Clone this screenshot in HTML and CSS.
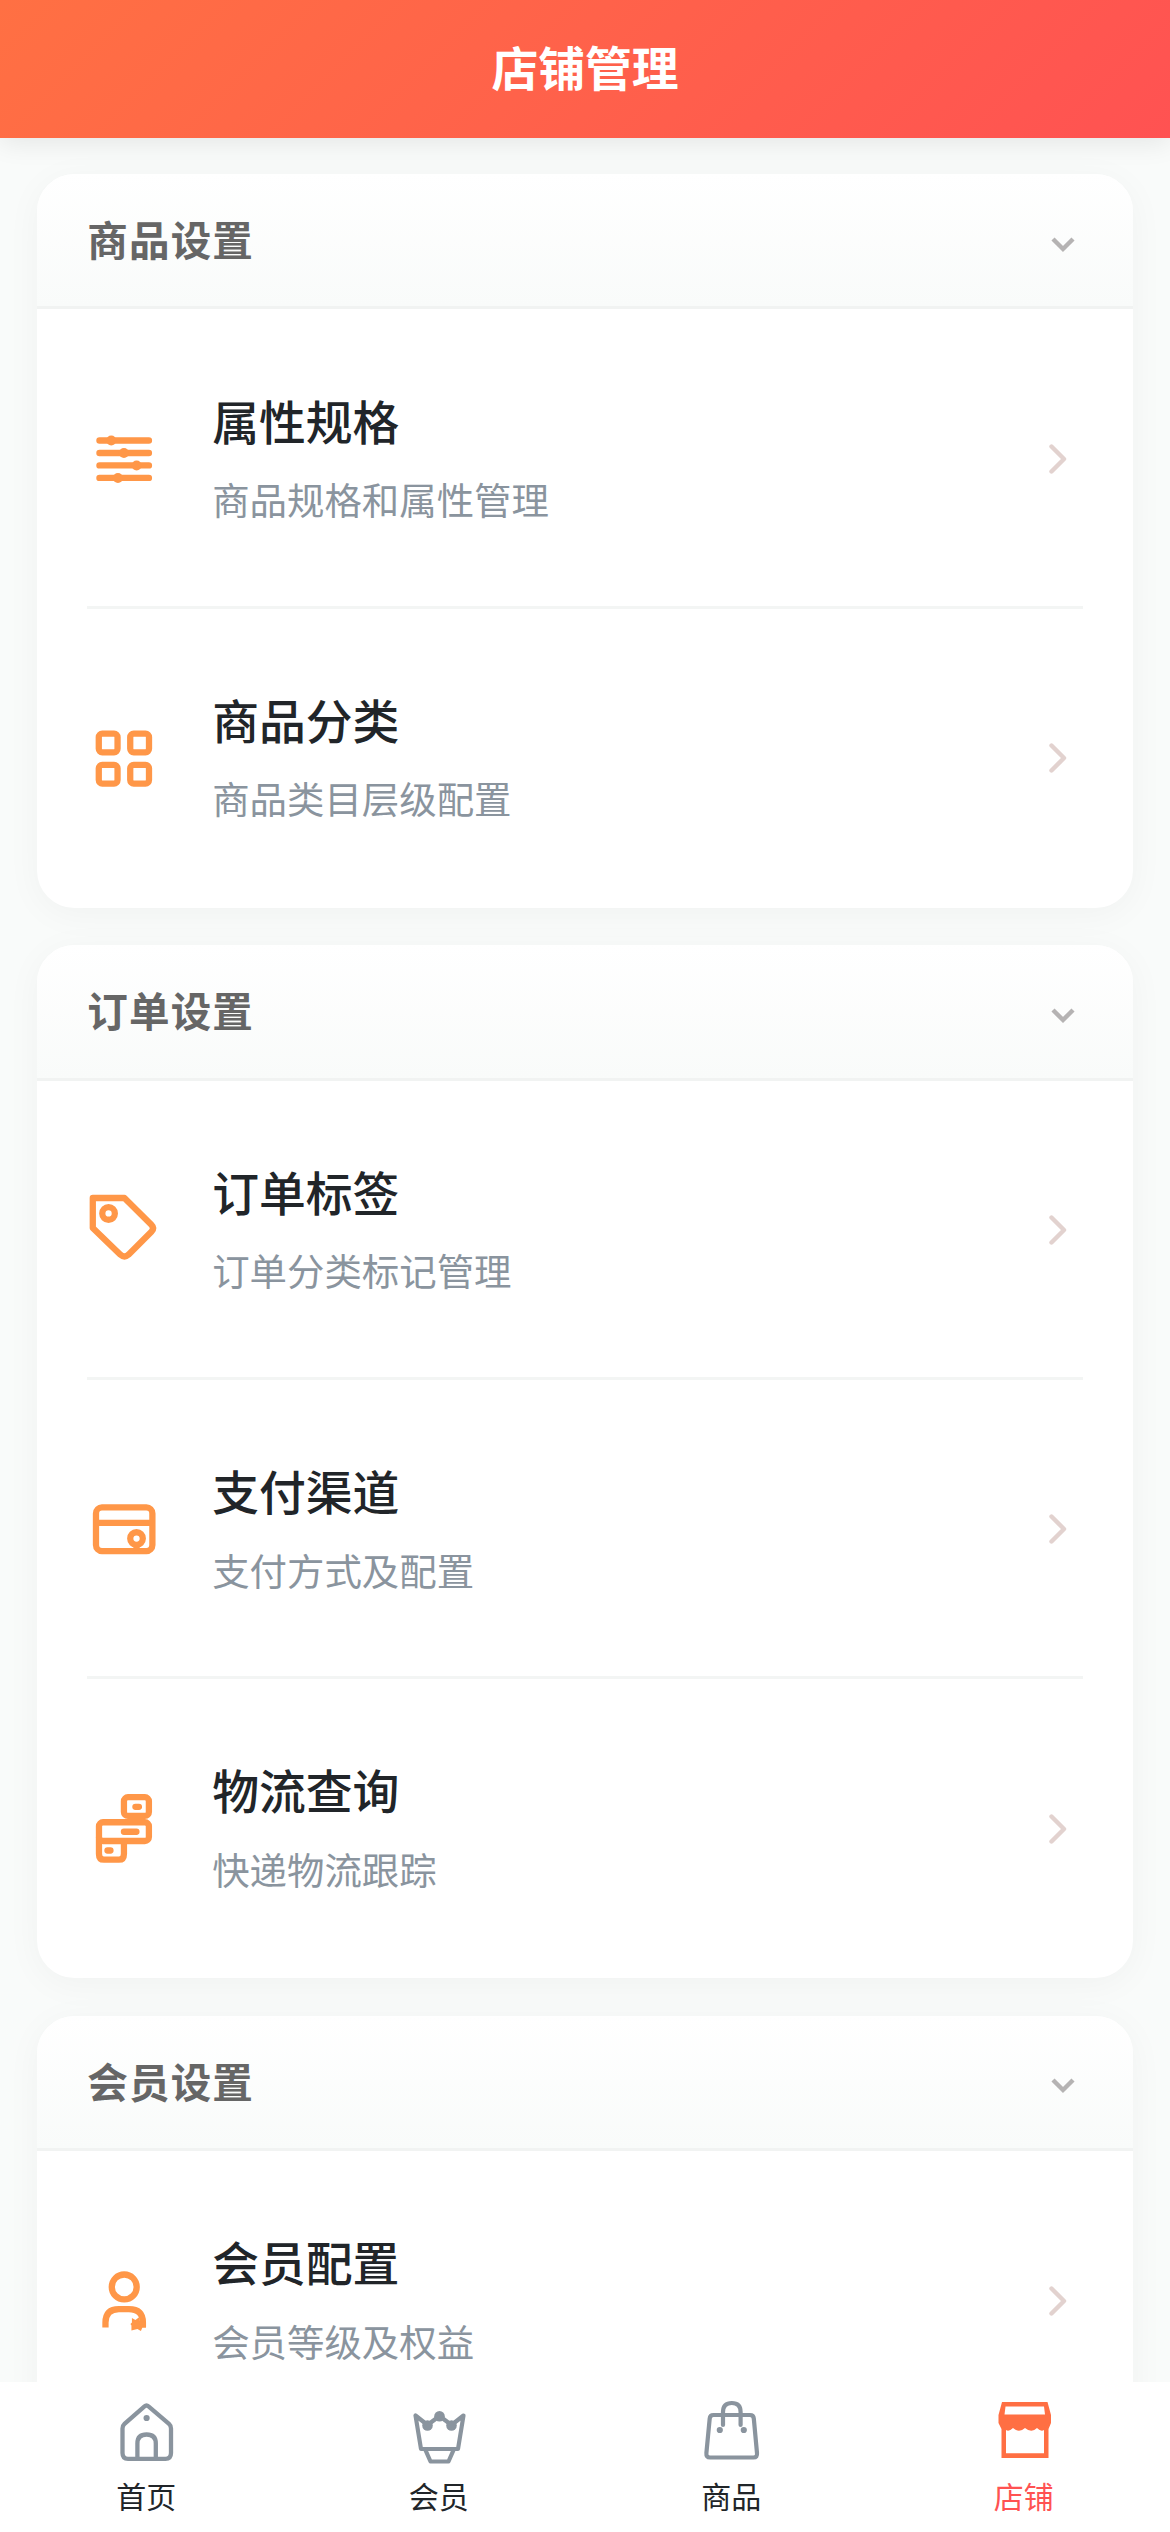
FILE: index.html
```html
<!DOCTYPE html>
<html lang="zh-CN">
<head>
<meta charset="utf-8">
<title>店铺管理</title>
<link rel="stylesheet" href="styles.css">
</head>
<body>
<svg width="0" height="0" class="defs">
  <symbol id="down" viewBox="0 0 24 16"><path d="M2 2l10 10L22 2" fill="none" stroke="currentColor" stroke-width="4.4"/></symbol>
  <symbol id="right" viewBox="0 0 18 30"><path d="M2.5 2.5L15 15 2.5 27.5" fill="none" stroke="currentColor" stroke-width="4.4" stroke-linecap="round" stroke-linejoin="round"/></symbol>
</svg>
<header class="navbar"><h1>店铺管理</h1></header>
<main class="content">
  <section class="card">
    <div class="card-head"><h2>商品设置</h2><svg class="down"><use href="#down"/></svg></div>
    <div class="item">
      <svg class="icon" viewBox="0 0 75 75"><g stroke="currentColor" stroke-width="6.4" stroke-linecap="round"><path d="M12.5 18.5h49.5M12.5 31h49.5M12.5 43.5h49.5M12.5 56h49.5"/></g><g fill="currentColor"><circle cx="24.3" cy="18.5" r="5"/><circle cx="37" cy="31" r="5"/><circle cx="49.7" cy="43.5" r="5"/><circle cx="31" cy="56" r="5"/></g></svg>
      <div class="text"><h3>属性规格</h3><p>商品规格和属性管理</p></div><svg class="right"><use href="#right"/></svg>
    </div>
    <div class="item">
      <svg class="icon" viewBox="0 0 75 75"><g fill="none" stroke="currentColor" stroke-width="6.3"><rect x="11.8" y="12.6" width="18.8" height="18.8" rx="3.5"/><rect x="43.3" y="12.6" width="18.8" height="18.8" rx="3.5"/><rect x="11.8" y="43.9" width="18.8" height="18.8" rx="3.5"/><rect x="43.3" y="43.9" width="18.8" height="18.8" rx="3.5"/></g></svg>
      <div class="text"><h3>商品分类</h3><p>商品类目层级配置</p></div><svg class="right"><use href="#right"/></svg>
    </div>
  </section>
  <section class="card">
    <div class="card-head"><h2>订单设置</h2><svg class="down"><use href="#down"/></svg></div>
    <div class="item">
      <svg class="icon" viewBox="0 0 75 75"><g fill="none" stroke="currentColor" stroke-width="6.3" stroke-linejoin="round"><path d="M5.8 5H37.5L64.5 31.8Q68 35.3 64.5 38.8L41.5 61.8Q37.5 65.3 33.5 61.8L5.8 35Z"/><circle cx="21.6" cy="20.5" r="6.3"/></g></svg>
      <div class="text"><h3>订单标签</h3><p>订单分类标记管理</p></div><svg class="right"><use href="#right"/></svg>
    </div>
    <div class="item">
      <svg class="icon" viewBox="0 0 75 75"><g fill="none" stroke="currentColor" stroke-width="6.3"><rect x="9" y="15.5" width="56.5" height="43.7" rx="6"/><path d="M9 31h56.5"/><circle cx="49.6" cy="46.6" r="6.3"/><path d="M49.6 54v5"/></g></svg>
      <div class="text"><h3>支付渠道</h3><p>支付方式及配置</p></div><svg class="right"><use href="#right"/></svg>
    </div>
    <div class="item">
      <svg class="icon" viewBox="0 0 75 75"><g fill="none" stroke="currentColor" stroke-width="6.3"><rect x="37" y="6.2" width="25" height="18.8" rx="4"/><rect x="12" y="31.3" width="50" height="18.8" rx="4"/><path d="M12 46V63Q12 68.8 17 68.8H32Q37 68.8 37 63V49"/><path d="M48.5 15.8h3.500M37 40.8h12.500M20.500 59.600h3" stroke-linecap="round"/></g></svg>
      <div class="text"><h3>物流查询</h3><p>快递物流跟踪</p></div><svg class="right"><use href="#right"/></svg>
    </div>
  </section>
  <section class="card">
    <div class="card-head"><h2>会员设置</h2><svg class="down"><use href="#down"/></svg></div>
    <div class="item">
      <svg class="icon" viewBox="0 0 75 75"><g fill="none" stroke="currentColor" stroke-width="6.3"><circle cx="37.3" cy="24" r="12.5"/><path d="M18.5 64.6V59.600Q18.500 46.100 32 46.100H42Q56 46.100 56 59.600V64.600"/></g><path d="M45 55L48.500 57L52.500 54L53 58L59 60V64.600H55.500L54 68L50.500 66L44.500 67.500V62.500L43.500 61L45 59.500Z" fill="currentColor"/></svg>
      <div class="text"><h3>会员配置</h3><p>会员等级及权益</p></div><svg class="right"><use href="#right"/></svg>
    </div>
  </section>
</main>
<nav class="tabbar">
  <a class="tab"><svg viewBox="0 0 72 72"><path d="M34.5 9.3Q36.5 7.5 38.5 9.3L59 26.800Q61 28.600 61 31.500V56Q61 61.800 55.500 61.800H18Q12.500 61.800 12.500 56V31.500Q12.500 28.600 14.500 26.800Z M27.400 61.800V46.500Q27.400 37.500 36.600 37.500T45.800 46.500V61.800" fill="none" stroke="currentColor" stroke-width="4.3" stroke-linejoin="round"/><circle cx="36.6" cy="21" r="3.1" fill="currentColor"/></svg><span>首页</span></a>
  <a class="tab"><svg viewBox="0 0 72 72"><path d="M12.5 18.5L18 52H55L60.5 18.5L48.5 28L36.5 19L24.5 28Z M22 52L27.5 64.5H45.5L51 52" fill="none" stroke="currentColor" stroke-width="4.2" stroke-linejoin="round"/><g fill="currentColor"><circle cx="36.5" cy="19.3" r="5.3"/><circle cx="24.5" cy="28.5" r="5.3"/><circle cx="48.5" cy="28.5" r="5.3"/></g></svg><span>会员</span></a>
  <a class="tab"><svg viewBox="0 0 72 72"><path d="M18.5 18H55Q58.5 18 58.8 21.5L62 56Q62.5 60.500 58.500 60.500H15Q11 60.500 11.400 56L14.700 21.500Q15 18 18.500 18ZM28 28V15Q28 6 36.800 6T45.600 15V28" fill="none" stroke="currentColor" stroke-width="4.2" stroke-linecap="round"/><g fill="currentColor"><circle cx="24.8" cy="33" r="3.1"/><circle cx="48.8" cy="33" r="3.1"/></g></svg><span>商品</span></a>
  <a class="tab active"><svg viewBox="0 0 72 72"><path fill="#ff6f43" fill-rule="evenodd" d="M14 5H59.5L63 18V26L60.5 32V61H13.5V32L10.5 26V18ZM17.5 9.5L16.5 17.500H57L56 9.500ZM18 33V56.300H56V33Q53 35 49 31Q43.500 36.500 37 31Q31 36.500 25 31Q21 35 18 33Z"/></svg><span>店铺</span></a>
</nav>
</body>
</html>
```
FILE: styles.css
```css
* { box-sizing: border-box; margin: 0; padding: 0; }
body {
  width: 1170px;
  height: 2532px;
  overflow: hidden;
  display: flex;
  flex-direction: column;
  background: #f9fbfa;
  font-family: "Noto Sans CJK SC", sans-serif;
}
.defs { display: none; }
svg { display: block; flex-shrink: 0; overflow: visible; }
.navbar {
  height: 138px;
  flex-shrink: 0;
  display: flex;
  align-items: center;
  justify-content: center;
  padding-bottom: 6px;
  background: linear-gradient(135deg, #ff7043 0%, #ff5252 100%);
  box-shadow: 0 6px 24px rgba(0, 0, 0, 0.08);
  position: relative;
  z-index: 1;
}
.navbar h1 { font-size: 46.8px; font-weight: 700; line-height: 66px; color: #fff; }
.content {
  flex: 1;
  min-height: 0;
  overflow: hidden;
  padding: 36px 37.44px 0;
  display: flex;
  flex-direction: column;
  gap: 37.44px;
}
.card {
  flex-shrink: 0;
  border-radius: 37.44px;
  background: #fff;
  overflow: hidden;
  box-shadow: 0 6px 36px rgba(0, 0, 0, 0.04);
}
.card-head {
  height: 135.4px;
  padding: 0 58px 2px 49.92px;
  display: flex;
  align-items: center;
  justify-content: space-between;
  background: linear-gradient(180deg, #fff, #f9fbfa);
  border-bottom: 3px solid #f1f3f2;
}
.card-head h2 { font-size: 40.56px; font-weight: 700; line-height: 60px; letter-spacing: 1.1px; color: #666; }
.down { width: 24px; height: 16px; margin-top: 11px; color: #b5b3b3; }
.item {
  height: 299.2px;
  margin: 0 49.92px;
  padding-right: 16px;
  display: flex;
  align-items: center;
  box-shadow: inset 0 -3px #f3f5f4;
}
.item:last-child { box-shadow: none; }
.icon { width: 74.88px; height: 74.88px; color: #ff9748; }
.text { flex: 1; margin-left: 49.92px; padding-bottom: 4px; display: flex; flex-direction: column; gap: 18.5px; }
.text h3 { font-size: 46.8px; font-weight: 500; line-height: 66px; color: #212529; }
.text p { font-size: 37.44px; line-height: 56px; color: #8a949e; }
.right { width: 18px; height: 30px; color: #e2d2cf; }
.tabbar {
  height: 150px;
  flex-shrink: 0;
  display: flex;
  background: #fff;
  position: relative;
}
.tab {
  flex: 1;
  display: flex;
  flex-direction: column;
  align-items: center;
  padding-top: 15px;
  color: #8a949e;
}
.tab svg { width: 72px; height: 72px; }
.tab span { margin-top: 6px; font-size: 30px; line-height: 40px; color: #212529; }
.tab.active span { color: #ff5252; }
```
